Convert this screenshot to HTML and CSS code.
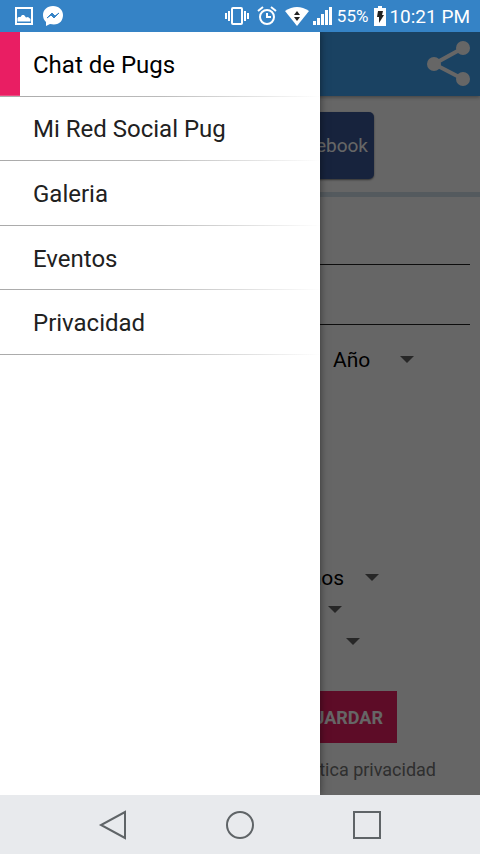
FILE: index.html
```html
<!DOCTYPE html>
<html lang="es">
<head>
<meta charset="utf-8">
<meta name="viewport" content="width=device-width, initial-scale=1">
<title>Chat de Pugs</title>
<link rel="stylesheet" href="styles.css">
</head>
<body>
<header class="status">
  <svg class="status-icon" width="20" height="20" viewBox="0 0 20 20" aria-hidden="true"><rect x="2" y="2" width="16" height="16" fill="none" stroke="#fff" stroke-width="2"/><path d="M3.500 15.500v-3.500l1-1 2 0 1.500-2 2 0 2 2.500 2-.5 2.500 2v2.500z" fill="#fff"/></svg>
  <svg class="messenger" width="22" height="22" viewBox="0 0 22 22" aria-hidden="true"><path d="M11 1C5 1 1 5 1 10c0 3 1 5 3 7v4l4-2c9 2 13-3 13-9 0-5-4-9-10-9z" fill="#fff"/><path d="M5 13l5-5 3 3 4-3-5 5-3-3z" fill="#3583c6" stroke="#3583c6"/></svg>
  <div class="status-right">
    <svg width="24" height="22" viewBox="1 0 24 22" fill="none" stroke="#fff" stroke-width="2" aria-hidden="true"><rect x="8" y="3" width="10" height="16" rx="1"/><path d="M5 6v10M21 6v10M2 8v6M24 8v6"/></svg>
    <svg class="alarm" width="20" height="22" viewBox="0 0 20 22" fill="none" stroke="#fff" stroke-width="2" aria-hidden="true"><circle cx="10" cy="12" r="7"/><path d="M10 8v4h4M1 6l5-4M19 6l-5-4"/></svg>
    <svg class="wifi" width="24" height="22" viewBox="0 0 24 22" aria-hidden="true"><path d="M0 6Q12-2 24 6L12 21z" fill="#fff"/><path d="M9 10l3-4 3 4zM9 12l3 4 3-4z" fill="#222"/></svg>
    <svg class="signal" width="20" height="22" viewBox="0 0 20 22" fill="#fff" aria-hidden="true"><path d="M0 16h3v4H0zM4 13h3v7H4zM8 9h3v11H8zM12 5h3v15h-3zM16 2h3v18h-3z"/></svg>
    <span class="percent">55%</span>
    <svg width="12" height="20" viewBox="0 0 12 20" aria-hidden="true"><path d="M4 0h4v2h4v18H0V2h4z" fill="#fff"/><path d="M4 5h5l-1 4h2l-5 8V11H3z" fill="#222"/></svg>
    <span class="clock">10:21 PM</span>
  </div>
</header>

<div class="screen">
  <main class="page">
    <div class="appbar">
      <button class="share" type="button" aria-label="Compartir"><svg width="46" height="48" viewBox="0 0 46 48" fill="#fff" aria-hidden="true"><path d="M38 8L9 24l29 15" fill="none" stroke="#fff" stroke-width="4"/><circle cx="9" cy="24" r="7"/><circle cx="38" cy="8" r="7"/><circle cx="38" cy="39" r="7"/></svg></button>
    </div>
    <div class="social"><button class="facebook" type="button">Facebook</button></div>
    <form class="form">
      <input class="field" type="text" aria-label="Nombre">
      <input class="field" type="text" aria-label="Correo">
      <div class="row date"><select class="select" aria-label="Año"><option>Año</option></select><svg class="arrow" width="14" height="8" viewBox="0 0 14 8" aria-hidden="true"><path d="M0 0h14L7 7z"/></svg></div>
      <div class="choices">
        <div class="row first"><select class="select group" aria-label="Grupo"><option>Machos</option></select><svg class="arrow" width="14" height="8" viewBox="0 0 14 8" aria-hidden="true"><path d="M0 0h14L7 7z"/></svg></div>
        <div class="row second"><select class="select" aria-label="País"><option></option></select><svg class="arrow" width="14" height="8" viewBox="0 0 14 8" aria-hidden="true"><path d="M0 0h14L7 7z"/></svg></div>
        <div class="row third"><select class="select" aria-label="Ciudad"><option></option></select><svg class="arrow" width="14" height="8" viewBox="0 0 14 8" aria-hidden="true"><path d="M0 0h14L7 7z"/></svg></div>
      </div>
      <button class="save" type="button">GUARDAR</button>
      <a class="policy" href="#">Política privacidad</a>
    </form>
  </main>
  <div class="scrim"></div>
  <nav class="drawer">
    <div class="menu">
      <a class="item active" href="#">Chat de Pugs</a>
      <a class="item" href="#">Mi Red Social Pug</a>
      <a class="item" href="#">Galeria</a>
      <a class="item" href="#">Eventos</a>
      <a class="item" href="#">Privacidad</a>
    </div>
  </nav>
</div>

<footer class="navbar">
  <button type="button" aria-label="Atrás"><svg width="30" height="30" viewBox="0 0 30 30"><path d="M27 2v26L3 15z"/></svg></button>
  <button type="button" aria-label="Inicio"><svg width="30" height="30" viewBox="0 0 30 30"><circle cx="15" cy="15" r="13"/></svg></button>
  <button type="button" aria-label="Recientes"><svg width="30" height="30" viewBox="0 0 30 30"><path d="M2 2h26v26H2z"/></svg></button>
</footer>
</body>
</html>
```
FILE: styles.css
```css
* { box-sizing: border-box; }

body {
  margin: 0;
  min-height: 100vh;
  display: grid;
  grid-template-rows: 32px 1fr 59px;
  font-family: Roboto, "Liberation Sans", sans-serif;
  color: #212121;
}

button, input, select {
  font: inherit;
  border: 0;
  background: none;
  padding: 0;
}

a { color: inherit; text-decoration: none; }
svg { display: block; flex: none; }

.status {
  display: flex;
  align-items: center;
  padding: 0 10px 0 14px;
  background: #3583c6;
  color: #fff;
}
.messenger { margin-left: 8px; }
.status-right {
  display: flex;
  align-items: center;
  margin-left: auto;
}
.alarm { margin-left: 8px; }
.wifi { margin-left: 8px; }
.signal { margin-left: 4px; }
.percent { margin: 0 6px 0 4px; font-size: 17px; }
.clock { margin-left: 3px; font-size: 19px; }

.screen {
  position: relative;
  overflow: hidden;
  background: #fff;
}

.appbar {
  display: flex;
  align-items: center;
  justify-content: flex-end;
  height: 64px;
  padding-right: 9px;
  background: #42a5f5;
  box-shadow: 0 1px 4px rgba(0, 0, 0, 0.4);
}

.social {
  display: flex;
  justify-content: flex-end;
  padding: 16px 106px 13px 10px;
  border-bottom: 5px solid #d3e0ea;
}
.facebook {
  height: 67px;
  padding: 0 6px 0 60px;
  border-radius: 5px;
  background: #3b5998;
  box-shadow: 0 1px 2px rgba(0, 0, 0, 0.5);
  color: #fff;
  font-size: 19px;
}

.form {
  display: flex;
  flex-direction: column;
  padding: 8px 10px;
}
.field {
  width: 100%;
  height: 60px;
  border-bottom: 1px solid #222;
}

.row {
  display: flex;
  align-items: center;
  justify-content: flex-end;
  height: 32px;
}
.select {
  appearance: none;
  width: 67px;
  height: 32px;
  color: #000;
  font-size: 21px;
}
.arrow { fill: #616161; }
.date { margin-top: 19px; padding-right: 56px; }
.choices { margin-top: 186px; }
.first { padding-right: 91px; }
.second { padding-right: 128px; }
.third { padding-right: 110px; }
.group { width: auto; padding-right: 20px; }

.save {
  align-self: flex-end;
  height: 52px;
  margin: 33px 73px 0 0;
  padding: 0 14px;
  background: #e91e63;
  color: #fff;
  font-size: 18px;
  font-weight: 700;
}
.policy {
  align-self: flex-end;
  margin: 15px 34px 0 0;
  color: #757575;
  font-size: 18px;
  line-height: 24px;
}

.scrim {
  position: absolute;
  inset: 0;
  background: rgba(0, 0, 0, 0.6);
}

.drawer {
  position: absolute;
  inset: 0 auto 0 0;
  width: 66.7%;
  background: #fff;
  box-shadow: 0 0 8px rgba(0, 0, 0, 0.5);
}
.menu {
  display: grid;
  grid-template-rows: repeat(5, 1fr);
  height: 323px;
}
.item {
  display: flex;
  align-items: center;
  padding: 2px 0 0 33px;
  border-bottom: 1px solid;
  border-image: linear-gradient(90deg, #aaa, #bbb 50%, #fff) 1;
  font-size: 24px;
}
.active {
  background: linear-gradient(#e91e63, #e91e63) left / 20px 100% no-repeat;
  color: #000;
}

.navbar {
  display: flex;
  align-items: center;
  justify-content: center;
  gap: 97px;
  background: #e8eaed;
}
.navbar svg {
  fill: none;
  stroke: #5f6467;
  stroke-width: 2;
}
```
